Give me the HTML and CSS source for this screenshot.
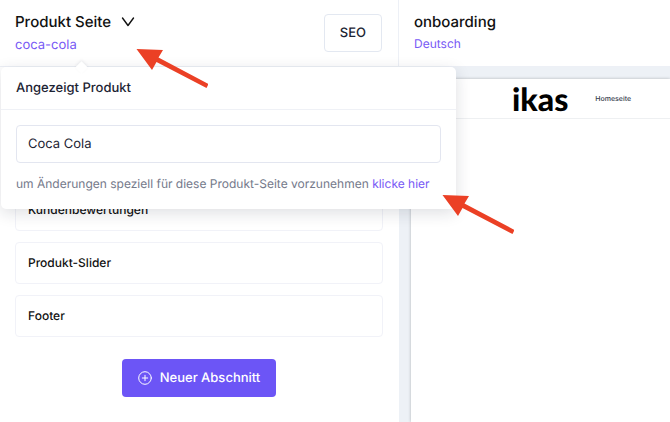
FILE: index.html
```html
<!DOCTYPE html>
<html lang="de">
<head>
    <meta charset="UTF-8">
    <meta name="viewport" content="width=device-width, initial-scale=1.0">
    <title>Produkt Seite</title>
    <link rel="stylesheet" href="styles.css">
</head>
<body>
    <div class="editor">
        <aside class="sidebar">
            <header class="sidebar-header">
                <div class="page-info">
                    <button class="page-select" type="button">
                        Produkt Seite
                        <svg width="14" height="10" viewBox="0 0 14 10" fill="none" stroke="currentColor" stroke-width="1.4" stroke-linecap="round" stroke-linejoin="round">
                            <path d="M1.500 1L7 8.500L12.500 1"/>
                        </svg>
                    </button>
                    <a class="page-link" href="#popover">coca-cola</a>
                </div>
                <button class="seo-btn" type="button">SEO</button>
            </header>

            <div class="sections">
                <div class="section-card">Kundenbewertungen</div>
                <div class="section-card">Produkt-Slider</div>
                <div class="section-card">Footer</div>
                <button class="add-btn" type="button">
                    <svg width="14" height="14" viewBox="0 0 14 14" fill="none" stroke="currentColor" stroke-linecap="round">
                        <circle cx="7" cy="7" r="6.300"/>
                        <path d="M7 4.300v5.400M4.300 7h5.400"/>
                    </svg>
                    Neuer Abschnitt
                </button>
            </div>
        </aside>

        <main class="preview">
            <header class="preview-header">
                <div class="theme-name">onboarding</div>
                <a class="theme-lang" href="#sprache">Deutsch</a>
            </header>
            <div class="canvas">
                <div class="site">
                    <nav class="site-nav">
                        <span class="logo">ikas</span>
                        <a class="nav-link" href="#home">Homeseite</a>
                    </nav>
                </div>
            </div>
        </main>
    </div>

    <div class="popover" id="popover">
        <label class="popover-title" for="product">Angezeigt Produkt</label>
        <div class="popover-body">
            <input class="product-input" id="product" type="text" value="Coca Cola">
            <p class="hint">um Änderungen speziell für diese Produkt-Seite vorzunehmen <a href="#bearbeiten">klicke hier</a></p>
        </div>
    </div>

    <svg class="arrow arrow-page" width="72" height="40" viewBox="0 0 72 40">
        <path d="M.5 1L27 2l-4.500 7.500L72.500 36l-2 4L20.500 14 16 22z"/>
    </svg>
    <svg class="arrow arrow-link" width="72" height="40" viewBox="0 0 72 40">
        <path d="M.5 1L27 2l-4.500 7.500L72.500 36l-2 4L20.500 14 16 22z"/>
    </svg>
</body>
</html>
```
FILE: styles.css
```css
* {
    box-sizing: border-box;
}
body {
    margin: 0;
    font-family: Inter, "Liberation Sans", sans-serif;
    font-size: 13px;
    color: #111;
    background: white;
    text-rendering: geometricPrecision;
}
a {
    color: #7759f5;
    text-decoration: none;
}
button,
input {
    font-family: inherit;
    text-rendering: inherit;
}
button {
    cursor: pointer;
}
.editor {
    display: grid;
    grid-template-columns: 399px 1fr;
    min-height: 100vh;
}
.sidebar-header,
.preview-header {
    height: 67px;
    padding: 12px 16px 0 15px;
    border-bottom: 1px solid #edf0f6;
}
.sidebar-header {
    display: flex;
    justify-content: space-between;
    border-right: 1px solid #edf0f6;
}
.page-select {
    display: flex;
    align-items: center;
    gap: 10px;
    padding: 0;
    border: none;
    background: none;
    color: #111;
    font-size: 15px;
    font-weight: 500;
    line-height: 20px;
}
.page-link {
    display: block;
    line-height: 26px;
}
.seo-btn {
    height: 38px;
    margin-top: 2px;
    padding: 0 15px;
    background: white;
    border: 1px solid #e3e8f1;
    border-radius: 4px;
    color: #1c2333;
    font-size: 13px;
    font-weight: 500;
}
/* the first rows sit behind the popover */
.sections {
    display: flex;
    flex-direction: column;
    gap: 11px;
    padding: 122px 16px 24px 15px;
}
.section-card {
    height: 42px;
    padding: 0 12px;
    border: 1px solid #f1f2f8;
    border-radius: 4px;
    font-size: 12px;
    font-weight: 500;
    line-height: 40px;
}
.add-btn {
    display: flex;
    align-items: center;
    align-self: center;
    gap: 8px;
    height: 38px;
    margin-top: 11px;
    padding: 0 16px;
    background: #6c55f6;
    border: none;
    border-radius: 4px;
    color: white;
    font-size: 13px;
    font-weight: 500;
}
.preview {
    display: flex;
    flex-direction: column;
}
.theme-name {
    font-size: 15px;
    font-weight: 500;
    line-height: 20px;
}
.theme-lang {
    display: block;
    font-size: 12px;
    line-height: 24px;
}
.canvas {
    flex: 1;
    padding: 12px 0 0 12px;
    background: #edf1f6;
    overflow: hidden;
}
.site {
    height: 100%;
    background: white;
    box-shadow: 0 0 3px rgba(0,0,0,0.25);
}
.site-nav {
    display: flex;
    align-items: center;
    gap: 27px;
    height: 40px;
    padding-left: 101px;
    border-bottom: 1px solid #eef0f2;
}
.logo {
    color: black;
    font-family: Lato, sans-serif;
    font-size: 32px;
    font-weight: 900;
    line-height: 36px;
}
.nav-link {
    color: #333a4a;
    font-size: 7px;
    font-weight: 500;
}
.popover {
    position: absolute;
    top: 67px;
    left: 1px;
    width: 455px;
    background: white;
    border-radius: 5px;
    box-shadow: 0 4px 16px rgba(20,30,50,0.14);
}
.popover::before {
    content: "";
    position: absolute;
    top: -4px;
    left: 76px;
    width: 9px;
    height: 9px;
    background: white;
    box-shadow: -1px -1px 3px rgba(20,30,50,0.07);
    transform: rotate(45deg);
}
.popover-title {
    display: block;
    padding: 0 15px;
    border-bottom: 1px solid #eff1f6;
    color: #1c2333;
    font-weight: 500;
    line-height: 42px;
}
.popover-body {
    padding: 15px;
}
.product-input {
    display: block;
    width: 100%;
    height: 38px;
    padding: 0 11px;
    border: 1px solid #e3e6f0;
    border-radius: 4px;
    color: #1c2333;
    font-size: 13px;
}
.hint {
    margin: 11px 0 0;
    color: #74798a;
    font-size: 12px;
    line-height: 20px;
    white-space: nowrap;
}
.arrow {
    position: absolute;
    fill: #eb4025;
    pointer-events: none;
}
.arrow-page {
    top: 48px;
    left: 136px;
}
.arrow-link {
    top: 194px;
    left: 442px;
}
```
